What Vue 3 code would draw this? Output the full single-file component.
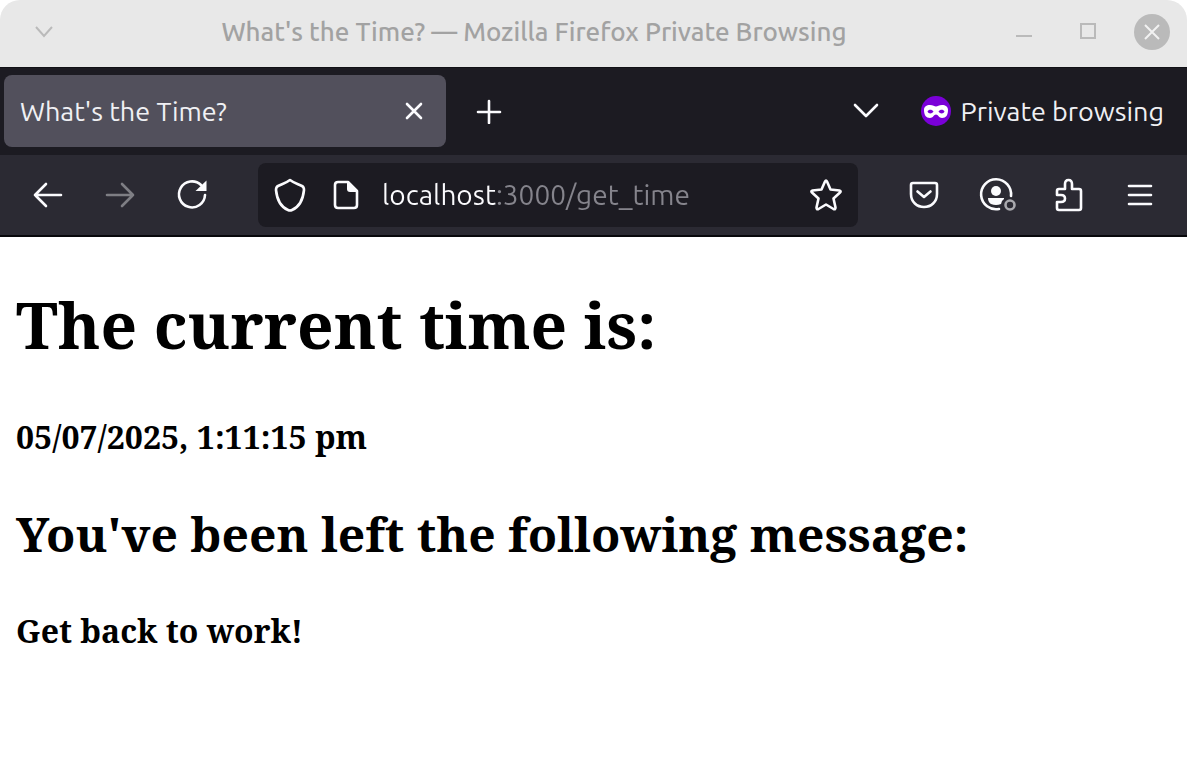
<script setup>
import { ref } from 'vue'

const pageTitle = "What's the Time?"
const url = ref('localhost:3000/get_time')
const currentTime = '05/07/2025, 1:11:15 pm'
const message = 'Get back to work!'
</script>

<template>
  <div class="window">
    <header class="titlebar">
      <button class="title-menu" aria-label="Window menu">
        <svg width="20" height="14" viewBox="0 0 20 14"><path d="M2 2 L10 11 L18 2" /></svg>
      </button>
      <div class="window-title">{{ pageTitle }} — Mozilla Firefox Private Browsing</div>
      <div class="window-controls">
        <button aria-label="Minimize">
          <svg width="18" height="18" viewBox="0 0 18 18"><path d="M1 13 H17" /></svg>
        </button>
        <button aria-label="Maximize">
          <svg width="18" height="18" viewBox="0 0 18 18"><rect x="2" y="1" width="14" height="14" /></svg>
        </button>
        <button aria-label="Close window">
          <svg width="36" height="36" viewBox="0 0 36 36">
            <circle class="close-disc" cx="18" cy="18" r="18" />
            <path class="close-cross" d="M11 11 L25 25 M25 11 L11 25" />
          </svg>
        </button>
      </div>
    </header>

    <div class="tabstrip">
      <div class="tab">
        <span class="tab-label">{{ pageTitle }}</span>
        <button class="tab-close" aria-label="Close tab">
          <svg width="18" height="18" viewBox="0 0 18 18"><path d="M2 2 L16 16 M16 2 L2 16" /></svg>
        </button>
      </div>
      <button class="new-tab" aria-label="New tab">
        <svg width="26" height="26" viewBox="0 0 26 26"><path d="M13 3 V25 M2 14 H24" /></svg>
      </button>
      <button class="list-tabs" aria-label="List all tabs">
        <svg width="28" height="20" viewBox="0 0 28 20"><path d="M3 4 L14 15 L25 4" /></svg>
      </button>
      <div class="private">
        <svg class="mask" width="30" height="30" viewBox="0 0 30 30">
          <circle cx="15" cy="15" r="15" fill="#7a00d8" />
          <path
            fill="#fff" fill-rule="evenodd"
            d="M3 14 C3 10.500 5.500 9 9 9 C12 9 13.500 10.500 15 10.500 C16.500 10.500 18 9 21 9 C24.500 9 27 10.500 27 14 C27 19 25 22 21 22 C18 22 17 18.500 15 18.500 C13 18.500 12 22 9 22 C5 22 3 19 3 14 Z M6.500 15.500 C7.500 18 11 18 12.500 15.500 C11 13 7.500 13 6.500 15.500 Z M17.500 15.500 C19 18 22.500 18 23.500 15.500 C22.500 13 19 13 17.500 15.500 Z"
          />
        </svg>
        <span>Private browsing</span>
      </div>
    </div>

    <nav class="toolbar">
      <button aria-label="Back">
        <svg width="32" height="32" viewBox="0 0 32 32"><path d="M29 16 H3 M14 5 L3 16 L14 27" /></svg>
      </button>
      <button class="disabled" aria-label="Forward" disabled>
        <svg width="32" height="32" viewBox="0 0 32 32"><path d="M3 16 H29 M18 5 L29 16 L18 27" /></svg>
      </button>
      <button aria-label="Reload">
        <svg width="32" height="32" viewBox="0 0 32 32">
          <path d="M25 6 A13 13 0 1 0 29 16" />
          <path d="M30.500 1.500 V12 H19.500 Z" fill="#fbfbfe" stroke="none" />
        </svg>
      </button>

      <div class="urlbar">
        <svg width="32" height="36" viewBox="0 0 32 36">
          <path d="M16 3 C20 6 24 7 28 9 C30 10 30 11 30 13 C29 23 25 30 18 33 Q16 34 14 33 C7 30 3 23 2 13 C2 11 2 10 4 9 C8 7 12 6 16 3 Z" />
        </svg>
        <svg width="28" height="32" viewBox="0 0 28 32">
          <path d="M6 3 H16 L25 12 V26 Q25 29 22 29 H6 Q3 29 3 26 V6 Q3 3 6 3 Z" />
          <path d="M15 3 L25 13 H18 Q15 13 15 10 Z" fill="#fbfbfe" stroke="none" />
        </svg>
        <input v-model="url" class="address" type="text" aria-label="Address" spellcheck="false" />
        <button class="bookmark" aria-label="Bookmark this page">
          <svg width="34" height="34" viewBox="0 0 34 34">
            <path d="M16 3.500 Q17 1.500 18 3.500 L21.500 11.500 L30.500 12.500 Q32.500 13 31 14.500 L24.500 20.500 L26.500 29.500 Q26.500 32 24.500 31 L17 26.500 L9.500 31 Q7.500 32 7.500 29.500 L9.500 20.500 L3 14.500 Q1.500 13 3.500 12.500 L12.500 11.500 Z" />
          </svg>
        </button>
      </div>

      <button aria-label="Save to Pocket">
        <svg width="32" height="32" viewBox="0 0 32 32">
          <path d="M5 4 H27 Q29 4 29 6 V15 C29 23 23 28 16 28 C9 28 3 23 3 15 V6 Q3 4 5 4 Z M9.500 12.500 L16 18 L22.500 12.500" />
        </svg>
      </button>
      <button aria-label="Account">
        <svg width="40" height="36" viewBox="0 0 40 36">
          <path d="M23 32 A15 15 0 1 1 35 19" />
          <circle cx="20" cy="14" r="5" fill="#fbfbfe" stroke="none" />
          <path d="M12 21 H28 V22 Q25 24 25 27 Q20 29 15 27 Q12 25 12 21 Z" fill="#fbfbfe" stroke="none" />
          <circle class="status" cx="34" cy="28" r="4.500" />
        </svg>
      </button>
      <button aria-label="Extensions">
        <svg width="32" height="36" viewBox="0 0 32 36">
          <path d="M7 33 H27 Q29 33 29 31 V14 Q29 12 27 12 H20 V7 Q20 3 16.500 3 Q13 3 13 7 V12 H7 Q5 12 5 14 V18 H9 Q13 18 13 21.500 Q13 25 9 25 H5 V31 Q5 33 7 33 Z" />
        </svg>
      </button>
      <button aria-label="Open application menu">
        <svg width="28" height="28" viewBox="0 0 28 28"><path d="M3 5 H25 M3 14 H25 M3 23 H25" /></svg>
      </button>
    </nav>

    <main class="page">
      <h1>The current time is:</h1>
      <p>{{ currentTime }}</p>
      <h2>You've been left the following message:</h2>
      <p>{{ message }}</p>
    </main>
  </div>
</template>

<style>
body {
  margin: 0;
  background: #fff;
}
</style>

<style scoped>
.window {
  font-family: Ubuntu, "Noto Sans", sans-serif;
  font-size: 26px;
}

button {
  display: flex;
  align-items: center;
  justify-content: center;
  flex: none;
  padding: 0;
  border: 0;
  background: none;
}

svg {
  display: block;
  flex: none;
  fill: none;
  stroke: #fbfbfe;
  stroke-width: 2.6;
  stroke-linecap: round;
  stroke-linejoin: round;
}

.titlebar {
  display: flex;
  align-items: center;
  height: 67px;
  box-sizing: border-box;
  padding-bottom: 4px;
  border-radius: 20px 20px 0 0;
  background: #e8e8e8;
}

.titlebar svg {
  stroke: #bababa;
  stroke-width: 2;
  stroke-linecap: butt;
  stroke-linejoin: miter;
}

.title-menu {
  width: 88px;
  height: 48px;
}

.window-title {
  flex: 1;
  text-align: center;
  white-space: nowrap;
  font-weight: 500;
  color: #a2a2a2;
}

.window-controls {
  display: flex;
  padding: 0 3px 0 12px;
}

.window-controls button {
  width: 64px;
  height: 48px;
}

.titlebar .close-disc {
  fill: #bababa;
  stroke: none;
}

.titlebar .close-cross {
  stroke: #f2f2f2;
}

.tabstrip {
  display: flex;
  align-items: center;
  height: 88px;
  padding: 0 23px 0 4px;
  background: #1c1b22;
  box-shadow: inset 0 1px #111116;
  font-size: 27px;
  color: #f0f0f4;
}

.tab {
  display: flex;
  align-items: center;
  justify-content: space-between;
  flex: 0 1 442px;
  height: 72px;
  box-sizing: border-box;
  padding: 0 8px 0 16px;
  border-radius: 8px;
  background: #52505c;
  white-space: nowrap;
}

.tab-close {
  width: 48px;
  height: 48px;
}

.new-tab {
  width: 86px;
  height: 72px;
}

.list-tabs {
  width: 72px;
  height: 72px;
  margin-left: auto;
}

.private {
  display: flex;
  align-items: center;
  gap: 10px;
  margin-left: 19px;
  white-space: nowrap;
}

.mask {
  stroke: none;
}

.toolbar {
  display: flex;
  align-items: center;
  height: 82px;
  box-sizing: border-box;
  padding: 0 11px 0 12px;
  border-bottom: 2px solid #08080c;
  background: #2b2a33;
}

.toolbar button {
  width: 72px;
  height: 64px;
}

.toolbar .disabled {
  opacity: 0.4;
}

.status {
  stroke: #a9a9ae;
}

.urlbar {
  display: flex;
  align-items: center;
  flex: 1;
  min-width: 0;
  height: 64px;
  box-sizing: border-box;
  margin: 0 30px;
  padding-left: 16px;
  gap: 26px;
  border-radius: 8px;
  background: #1c1b22;
}

.address {
  flex: 1;
  min-width: 0;
  height: 48px;
  box-sizing: border-box;
  padding: 0 0 2px;
  margin-left: -4px;
  border: 0;
  outline: 0;
  font: inherit;
  font-size: 28px;
  color: transparent;
  caret-color: #fbfbfe;
  background: linear-gradient(90deg, #fbfbfe 115px, #85848c 115px);
  background-clip: text;
}

.toolbar .bookmark {
  width: 64px;
}

.page {
  padding: 40px 16px;
  font-family: "Noto Serif", "DejaVu Serif Condensed", "DejaVu Serif", serif;
  font-weight: 700;
  color: #000;
}

.page h1 {
  margin: 0;
  font-size: 64px;
  line-height: 96px;
}

.page h2 {
  margin: 40px 0;
  font-size: 48px;
  line-height: 66px;
}

.page p {
  margin: 40px 0 0;
  font-size: 32px;
  line-height: 48px;
}
</style>
